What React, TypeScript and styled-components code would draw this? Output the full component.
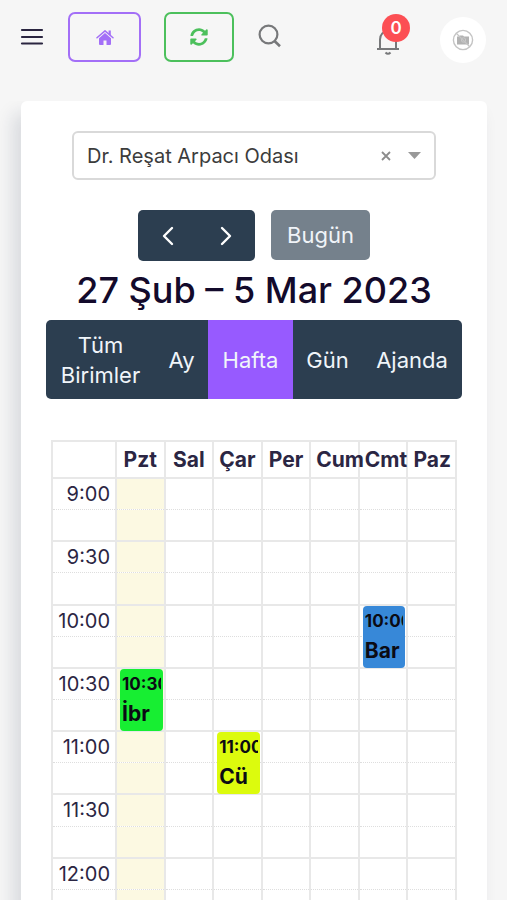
import React from "react";
import styled, { createGlobalStyle } from "styled-components";
import { FaSyncAlt } from "react-icons/fa";

const GlobalStyle = createGlobalStyle`
  *, *::before, *::after { box-sizing: border-box; }
  body {
    margin: 0;
    background: #f6f6f6;
    color: #2b2643;
    font-family: Inter, "Open Sans", sans-serif;
    font-size: 20px;
  }
  button, select { font: inherit; }
  button { cursor: pointer; }
`;

const Shell = styled.div`
  display: flex;
  flex-direction: column;
  height: 100vh;
`;

const TopBar = styled.header`
  display: flex;
  align-items: center;
  flex: none;
  padding: 11px 21px 38px 20px;
`;

const IconButton = styled.button`
  display: flex;
  padding: 0;
  border: 0;
  background: none;
  color: #77787a;
`;

const MenuButton = styled(IconButton)`
  margin-right: 24px;
  color: #2a2540;
`;

const OutlineLink = styled.a<{ $color: string; $width: number }>`
  display: flex;
  align-items: center;
  justify-content: center;
  width: ${(p) => p.$width}px;
  height: 50px;
  margin-right: 23px;
  border: 2px solid ${(p) => p.$color};
  border-radius: 7px;
  color: ${(p) => p.$color};
  font-size: 18px;
`;

const RightTools = styled.div`
  display: flex;
  align-items: center;
  gap: 40px;
  margin-left: auto;
`;

const BellButton = styled(IconButton)`
  position: relative;
  padding-top: 9px;
`;

const Badge = styled.span`
  position: absolute;
  top: -5px;
  right: -10px;
  display: flex;
  align-items: center;
  justify-content: center;
  width: 28px;
  height: 28px;
  border-radius: 50%;
  background: #fc4f54;
  color: #fff;
  font-size: 17px;
  font-weight: 600;
`;

const Avatar = styled.button`
  display: flex;
  align-items: center;
  justify-content: center;
  width: 46px;
  height: 46px;
  margin-top: 6px;
  padding: 0;
  border: 0;
  border-radius: 50%;
  background: #fff;
`;

const Main = styled.main`
  flex: 1;
  min-height: 0;
  overflow-y: auto;
  scrollbar-width: none;
  padding: 0 20px 0 21px;
`;

const Card = styled.section`
  padding: 30px 25px 40px;
  border-radius: 6px;
  background: #fff;
  box-shadow: -8px 12px 18px 0 rgba(25, 42, 70, 0.13);
`;

const RoomField = styled.div`
  display: flex;
  align-items: center;
  height: 49px;
  margin: 0 26px 30px;
  padding: 0 13px;
  border: 2px solid #d9d9d9;
  border-radius: 6px;
`;

const RoomSelect = styled.select`
  flex: 1;
  min-width: 0;
  padding: 0;
  border: 0;
  background: none;
  appearance: none;
  color: #3c3c3c;
  font-size: 20px;
`;

const ClearButton = styled(IconButton)`
  margin-right: 17px;
`;

const CalendarNav = styled.div`
  display: flex;
  justify-content: center;
  gap: 16px;
`;

const ArrowGroup = styled.div`
  display: flex;
  overflow: hidden;
  border-radius: 5px;
`;

const ArrowButton = styled.button`
  display: flex;
  align-items: center;
  justify-content: center;
  width: 58px;
  height: 51px;
  padding: 0;
  border: 0;
  background: #2c3e50;
  color: #fff;
  &:first-child { width: 59px; }
`;

const TodayButton = styled.button`
  height: 50px;
  padding: 0 16px;
  border: 0;
  border-radius: 5px;
  background: #75818c;
  color: #f0f4f8;
  font-size: 22px;
`;

const Title = styled.h2`
  margin: 0;
  color: #130a2b;
  font-size: 36px;
  font-weight: 500;
  line-height: 59px;
  text-align: center;
  white-space: nowrap;
`;

const ViewGroup = styled.div`
  display: grid;
  grid-template-columns: 109fr 53fr 85fr 69fr 100fr;
  height: 79px;
  margin-bottom: 41px;
  overflow: hidden;
  border-radius: 5px;
`;

const ViewButton = styled.button<{ $active?: boolean }>`
  padding: 0;
  border: 0;
  background: ${(p) => (p.$active ? "#975aff" : "#2c3e50")};
  color: #f0f5fa;
  font-size: 22px;
  line-height: 30px;
`;

const GridWrap = styled.div`
  padding: 0 5px;
`;

const WeekTable = styled.table`
  width: 100%;
  height: 482px;
  table-layout: fixed;
  border-collapse: collapse;
  border: 2px solid #e8e8e8;
`;

const AxisCol = styled.col`
  width: 64px;
`;

const DayHead = styled.th`
  height: 37px;
  padding: 0 5px;
  border: 2px solid #e8e8e8;
  font-size: 21px;
  font-weight: 700;
  line-height: 30px;
  white-space: nowrap;
`;

const TimeCell = styled.th`
  padding: 0 5px 0 0;
  border-right: 2px solid #e8e8e8;
  font-size: 20px;
  font-weight: 400;
  line-height: 30px;
  text-align: right;
`;

const SlotRow = styled.tr<{ $minor?: boolean }>`
  border-top: ${(p) => (p.$minor ? "1px dotted #dedede" : "2px solid #e8e8e8")};
`;

const SlotCell = styled.td<{ $today?: boolean }>`
  position: relative;
  padding: 0;
  border-right: 2px solid #e8e8e8;
  background: ${(p) => (p.$today ? "#fcf9e2" : "transparent")};
  background-clip: padding-box;
`;

const EventBox = styled.a<{ $color: string }>`
  position: absolute;
  z-index: 1;
  top: 0;
  left: 3px;
  right: 1px;
  height: 62px;
  padding: 0 2px;
  border-radius: 4px;
  background: ${(p) => p.$color};
  color: #0b0b14;
  font-weight: 700;
  line-height: 30px;
  text-decoration: none;
`;

const EventLine = styled.span<{ $small?: boolean }>`
  display: block;
  overflow: hidden;
  font-size: ${(p) => (p.$small ? 17 : 21)}px;
  white-space: nowrap;
`;

const days = ["Pzt", "Sal", "Çar", "Per", "Cum", "Cmt", "Paz"];
const times = ["9:00", "9:30", "10:00", "10:30", "11:00", "11:30", "12:00"];
const views = ["Tüm Birimler", "Ay", "Hafta", "Gün", "Ajanda"];
const events = [
  { day: "Cmt", time: "10:00", title: "Bar", color: "#3788d8" },
  { day: "Pzt", time: "10:30", title: "İbr", color: "#17ee32" },
  { day: "Çar", time: "11:00", title: "Cü", color: "#dcfb0d" },
];

function Chevron({ left }: { left?: boolean }) {
  return (
    <svg width="12" height="20" viewBox="0 0 12 20" fill="none" stroke="currentColor" strokeWidth="2.4" strokeLinecap="round" strokeLinejoin="round">
      <path d={left ? "M10 2 2 10l8 8" : "m2 2 8 8-8 8"} />
    </svg>
  );
}

function HomeIcon() {
  return (
    <svg width="18" height="17" viewBox="0 0 18 17" fill="currentColor">
      <path d="M3 9.200 9 4l6 5.200V15a1 1 0 0 1-1 1h-3.500v-4.500h-3V16H4a1 1 0 0 1-1-1z" />
      <path d="M12.600 1.500h2.200v5l-2.200-2z" />
      <path d="M1 8.800 9 1.900l8 6.900" fill="none" stroke="currentColor" strokeWidth="1.500" strokeLinecap="round" strokeLinejoin="round" />
    </svg>
  );
}

function Header() {
  return (
    <TopBar>
      <MenuButton aria-label="Menü">
        <svg width="24" height="18" viewBox="0 0 24 18" stroke="currentColor" strokeWidth="2.2" strokeLinecap="round">
          <path d="M2 2h20M2 9h20M2 15.5h20" />
        </svg>
      </MenuButton>
      <OutlineLink href="#home" aria-label="Ana sayfa" $color="#a36ff7" $width={73}><HomeIcon /></OutlineLink>
      <OutlineLink href="#refresh" aria-label="Yenile" $color="#4cc05c" $width={70}><FaSyncAlt /></OutlineLink>
      <IconButton aria-label="Ara">
        <svg width="26" height="26" viewBox="0 0 26 26" fill="none" stroke="currentColor" strokeWidth="2.2">
          <circle cx="11.5" cy="10.5" r="8.9" />
          <path d="m17.5 17 5.500 5.200" strokeWidth="2.6" />
        </svg>
      </IconButton>
      <RightTools>
        <BellButton aria-label="Bildirimler">
          <svg width="24" height="27" viewBox="0 0 24 27" fill="none" stroke="currentColor" strokeWidth="2">
            <path d="M1 21h22M4 21v-9.5C4 6.5 7.5 3 12 3s8 3.500 8 8.500V21" />
            <path d="M9.500 24.500c1.500 1.600 3.500 1.600 5 0" />
          </svg>
          <Badge>0</Badge>
        </BellButton>
        <Avatar aria-label="Profil">
          <svg width="22" height="22" viewBox="0 0 22 22" fill="none">
            <circle cx="11" cy="11" r="9.600" stroke="#c4c4c4" strokeWidth="1.400" />
            <path d="M5 7.500h2L8 6.500h3l1 1h5v8H5z" fill="#b2b2b2" />
            <circle cx="11.500" cy="11" r="2.200" stroke="#c9c9c9" />
            <path d="m4.500 4.500 13 13" stroke="#c4c4c4" strokeWidth="1.200" />
          </svg>
        </Avatar>
      </RightTools>
    </TopBar>
  );
}

function WeekGrid() {
  return (
    <GridWrap>
      <WeekTable>
        <colgroup>
          <AxisCol />
          {days.map((d) => <col key={d} />)}
        </colgroup>
        <thead>
          <tr>
            <DayHead as="td" />
            {days.map((d) => <DayHead key={d} scope="col">{d}</DayHead>)}
          </tr>
        </thead>
        <tbody>
          {times.map((time) => (
            <React.Fragment key={time}>
              <SlotRow>
                <TimeCell scope="row">{time}</TimeCell>
                {days.map((day) => {
                  const event = events.find((e) => e.day === day && e.time === time);
                  return (
                    <SlotCell key={day} $today={day === "Pzt"}>
                      {event && (
                        <EventBox href="#event" $color={event.color}>
                          <EventLine $small>{event.time}</EventLine>
                          <EventLine>{event.title}</EventLine>
                        </EventBox>
                      )}
                    </SlotCell>
                  );
                })}
              </SlotRow>
              <SlotRow $minor>
                <TimeCell as="td">&nbsp;</TimeCell>
                {days.map((day) => <SlotCell key={day} $today={day === "Pzt"} />)}
              </SlotRow>
            </React.Fragment>
          ))}
        </tbody>
      </WeekTable>
    </GridWrap>
  );
}

export default function App() {
  return (
    <>
      <GlobalStyle />
      <Shell>
        <Header />
        <Main>
          <Card>
            <RoomField>
              <RoomSelect aria-label="Oda">
                <option>Dr. Reşat Arpacı Odası</option>
              </RoomSelect>
              <ClearButton aria-label="Temizle">
                <svg width="10" height="10" viewBox="0 0 10 10" stroke="#8c8c8c" strokeWidth="1.800">
                  <path d="m1 1 8 8M9 1 1 9" />
                </svg>
              </ClearButton>
              <svg width="13" height="7" viewBox="0 0 13 7" fill="#999">
                <path d="M0 0h13L6.500 7z" />
              </svg>
            </RoomField>
            <CalendarNav>
              <ArrowGroup>
                <ArrowButton aria-label="Önceki"><Chevron left /></ArrowButton>
                <ArrowButton aria-label="Sonraki"><Chevron /></ArrowButton>
              </ArrowGroup>
              <TodayButton>Bugün</TodayButton>
            </CalendarNav>
            <Title>27 Şub – 5 Mar 2023</Title>
            <ViewGroup>
              {views.map((v) => (
                <ViewButton key={v} $active={v === "Hafta"} aria-pressed={v === "Hafta"}>{v}</ViewButton>
              ))}
            </ViewGroup>
            <WeekGrid />
          </Card>
        </Main>
      </Shell>
    </>
  );
}
